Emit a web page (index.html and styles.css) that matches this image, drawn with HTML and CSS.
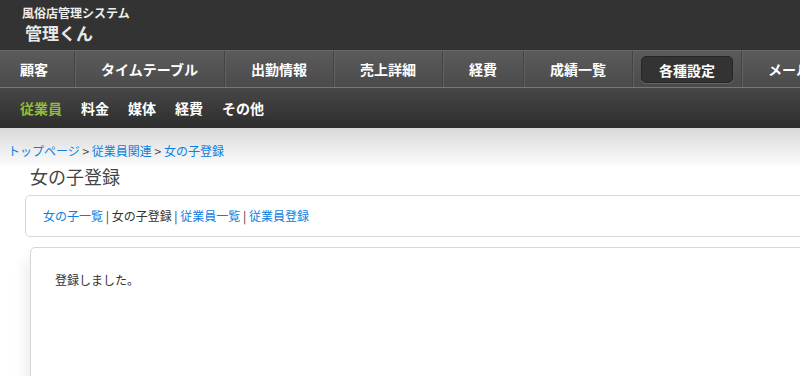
FILE: index.html
```html
<!DOCTYPE html>
<html lang="ja">
<head>
    <meta charset="UTF-8">
    <meta name="viewport" content="width=device-width, initial-scale=1.0">
    <title>女の子登録 | 管理くん</title>
    <link rel="stylesheet" href="styles.css">
</head>
<body>
    <div class="page">
        <div class="header">
            <div class="site-sub">風俗店管理システム</div>
            <div class="site-name">管理くん</div>
        </div>

        <ul class="nav">
            <li class="first"><a href="#">顧客</a></li>
            <li><a href="#">タイムテーブル</a></li>
            <li><a href="#">出勤情報</a></li>
            <li><a href="#">売上詳細</a></li>
            <li><a href="#">経費</a></li>
            <li><a href="#">成績一覧</a></li>
            <li><a href="#" class="active">各種設定</a></li>
            <li><a href="#">メール配信</a></li>
        </ul>

        <ul class="subnav">
            <li><a href="#" class="current">従業員</a></li>
            <li><a href="#">料金</a></li>
            <li><a href="#">媒体</a></li>
            <li><a href="#">経費</a></li>
            <li><a href="#">その他</a></li>
        </ul>

        <div class="content">
            <div class="breadcrumb">
                <a href="#">トップページ</a> &gt; <a href="#">従業員関連</a> &gt; <a href="#">女の子登録</a>
            </div>
            <h1 class="title">女の子登録</h1>

            <div class="box menu-box">
                <a href="#">女の子一覧</a> | <span>女の子登録</span> | <a href="#">従業員一覧</a> | <a href="#">従業員登録</a>
            </div>

            <div class="box message-box">
                <p>登録しました。</p>
            </div>
        </div>
    </div>
</body>
</html>
```

FILE: styles.css
```css
html, body {
    margin: 0;
    padding: 0;
    overflow: hidden;
}
body {
    font-family: "Noto Sans CJK JP", "Noto Sans", sans-serif;
    font-size: 12px;
    color: #333;
    background: #fff;
}
a {
    text-decoration: none;
}
.page {
    width: 1000px;
}
.header {
    height: 50px;
    background: #333;
    padding-left: 22px;
    box-sizing: border-box;
    color: #fff;
}
.site-sub {
    font-size: 12px;
    font-weight: bold;
    line-height: 14px;
    padding-top: 6px;
    color: #eee;
}
.site-name {
    font-size: 17px;
    font-weight: bold;
    line-height: 20px;
    margin-top: 3px;
    padding-left: 3px;
    color: #e8e8e8;
}
.nav {
    list-style: none;
    margin: 0;
    padding: 0;
    display: flex;
    height: 38px;
    box-sizing: border-box;
    border-top: 1px solid #6a6a6a;
    border-bottom: 1px solid #777;
    background: linear-gradient(#5b5b5b, #4b4b4b);
}
.nav li {
    display: flex;
    align-items: center;
    padding: 0 8px;
    border-left: 1px solid #434343;
    box-shadow: inset 1px 0 0 #626262;
    white-space: nowrap;
}
.nav li.first {
    padding-left: 2px;
    border-left: none;
    box-shadow: none;
}
.nav a {
    display: block;
    padding: 0 18px;
    height: 27px;
    line-height: 26px;
    box-sizing: border-box;
    font-size: 14px;
    font-weight: bold;
    color: #fff;
}
.nav a.active {
    background: #333;
    border: 1px solid #262626;
    border-radius: 5px;
    box-shadow: 0 1px 0 #666;
    padding: 0 17px;
}
.subnav {
    list-style: none;
    margin: 0;
    padding: 0 0 0 20px;
    display: flex;
    gap: 19px;
    height: 40px;
    align-items: center;
    background: linear-gradient(#474747, #2d2d2d);
}
.subnav a {
    font-size: 14px;
    font-weight: bold;
    color: #fff;
}
.subnav a.current {
    color: #93bd36;
}
.content {
    background: linear-gradient(#d9d9d9 0, #f8f8f8 34px, #fff 40px);
    padding-top: 15px;
}
.breadcrumb {
    padding-left: 8px;
    line-height: 16px;
    color: #444;
}
.breadcrumb a,
.menu-box a {
    color: #0b80e0;
}
.title {
    margin: 4px 0 0 30px;
    font-size: 18px;
    font-weight: normal;
    line-height: 26px;
    color: #444;
}
.box {
    background: #fff;
    border: 1px solid #d6d6d6;
    border-radius: 5px;
}
.menu-box {
    margin: 6px 0 0 25px;
    height: 42px;
    box-sizing: border-box;
    padding: 10px 17px 0;
    line-height: 20px;
    color: #333;
}
.message-box {
    margin: 10px 0 0 30px;
    height: 200px;
    padding: 18px 24px;
    box-shadow: -5px 12px 14px rgba(0, 0, 0, 0.07);
}
.message-box p {
    margin: 0;
    line-height: 28px;
}
```
